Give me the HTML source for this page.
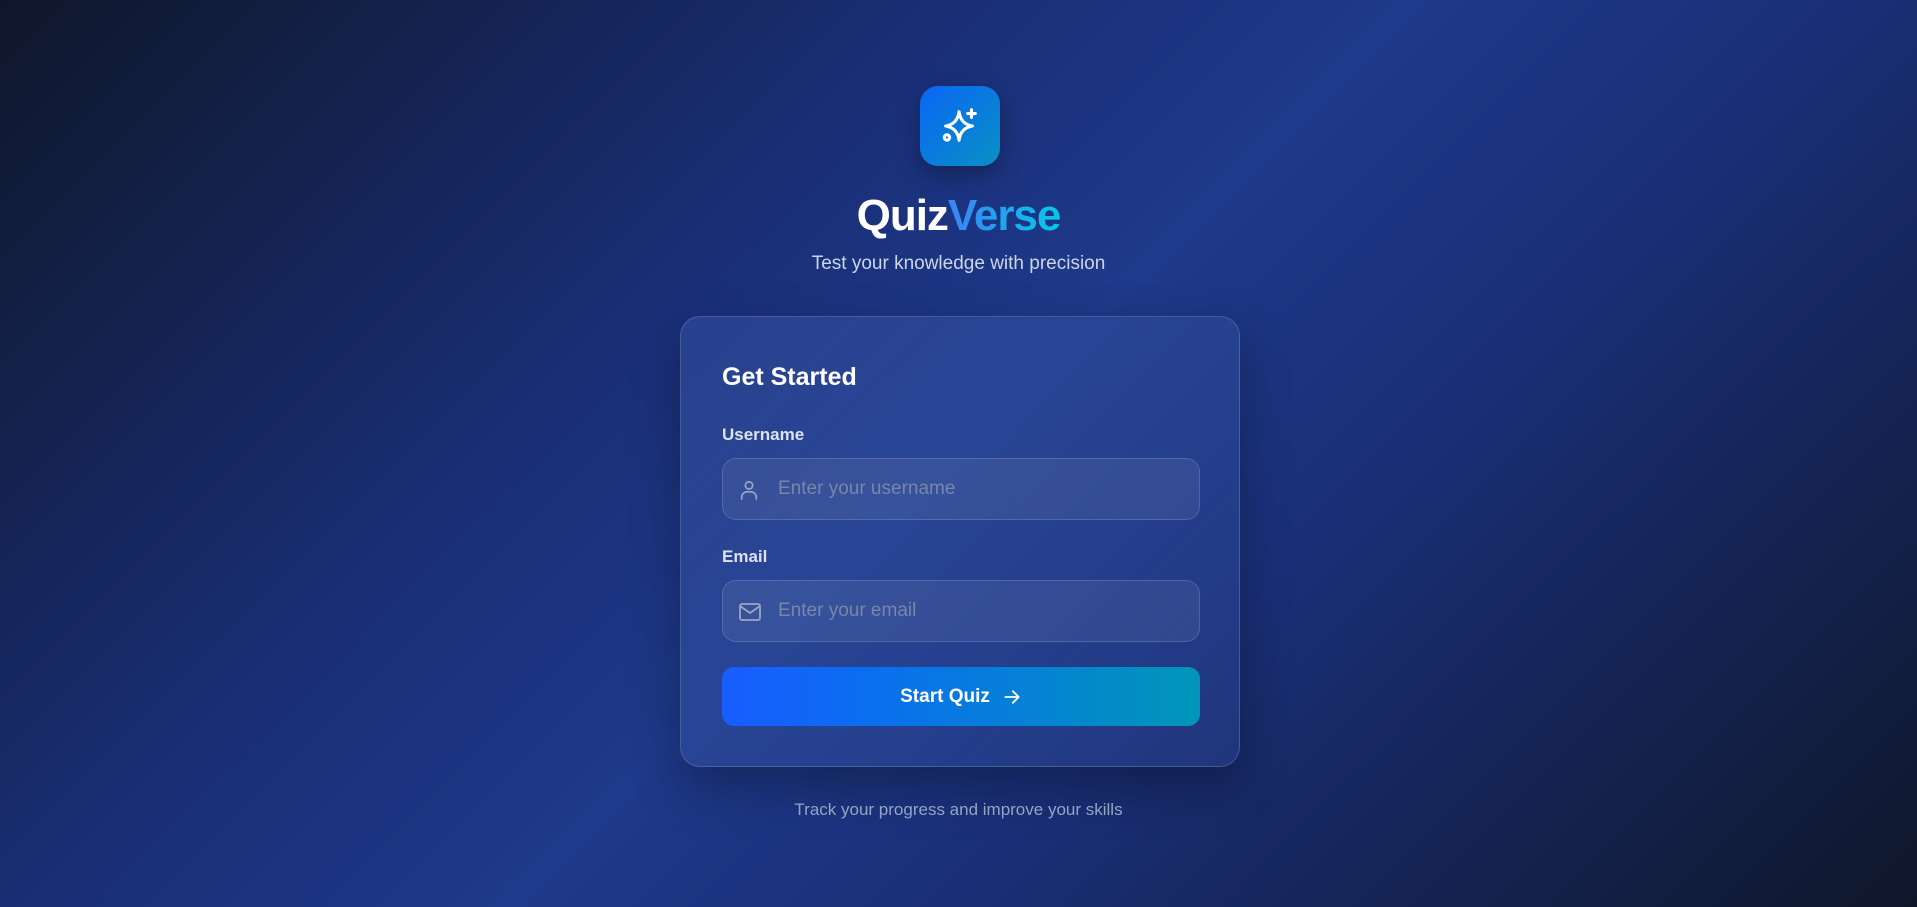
<!DOCTYPE html>
<html><head><meta charset="utf-8"><style>
*{box-sizing:border-box;margin:0;padding:0}
html,body{width:1917px;height:907px;overflow:hidden}
body{font-family:"Liberation Sans",sans-serif;background:linear-gradient(135deg,#0f172a 0%,#1a2f78 35%,#1e3a8a 50%,#1a2f78 65%,#0f172a 100%);position:relative;color:#fff}
.logo{position:absolute;left:920px;top:86px;width:80px;height:80px;border-radius:18px;background:linear-gradient(135deg,#0a66f5,#0891c4);box-shadow:0 8px 24px rgba(0,0,0,.3);display:flex;align-items:center;justify-content:center}
.title{position:absolute;left:0;width:1917px;top:191px;text-align:center;font-size:44px;font-weight:bold;letter-spacing:-1px}
.title span{background:linear-gradient(90deg,#3b82f6,#06c8e8);-webkit-background-clip:text;color:transparent}
.sub{position:absolute;left:0;width:1917px;top:253px;text-align:center;font-size:19px;color:#cbd5e8}
.card{position:absolute;left:680px;top:316px;width:560px;height:451px;border-radius:20px;background:linear-gradient(135deg,rgba(60,90,170,.45),rgba(50,80,160,.3));border:1px solid rgba(255,255,255,.15);box-shadow:0 20px 50px rgba(0,0,0,.3)}
.h{position:absolute;left:41px;top:46px;font-size:25px;font-weight:bold}
.lbl{position:absolute;left:41px;font-size:17px;font-weight:bold;color:#dbe2f0}
.inp{position:absolute;left:41px;width:478px;height:62px;border-radius:14px;background:rgba(255,255,255,.07);border:1px solid rgba(255,255,255,.15)}
.inp svg{position:absolute;left:15px;top:19px}
.inp div{position:absolute;left:55px;top:19px;font-size:19px;color:#7886a8}
.btn{position:absolute;left:41px;top:350px;width:478px;height:59px;border-radius:12px;background:linear-gradient(90deg,#1a5cff,#0a6ef0 30%,#0096b8);display:flex;align-items:center;justify-content:center;font-size:19px;font-weight:bold;gap:12px}
.foot{position:absolute;left:0;width:1917px;top:800px;text-align:center;font-size:17px;color:#95a3c5}
</style></head><body>
<div class="logo"><svg width="46" height="46" viewBox="0 0 24 24" fill="none" stroke="#fff" stroke-width="1.6" stroke-linecap="round" stroke-linejoin="round"><path d="M11.5 4.5 Q12.3 11 18.5 12 Q12.3 13 11.5 19.5 Q10.7 13 4.5 12 Q10.7 11 11.5 4.5Z"/><path d="M18 3.5v4M16 5.5h4"/><circle cx="5.2" cy="18" r="1.4"/></svg></div>
<div class="title">Quiz<span>Verse</span></div>
<div class="sub">Test your knowledge with precision</div>
<div class="card">
<div class="h">Get Started</div>
<div class="lbl" style="top:108px">Username</div>
<div class="inp" style="top:141px"><svg width="22" height="24" viewBox="0 0 24 24" fill="none" stroke="#9aa6c4" stroke-width="1.8" stroke-linecap="round"><circle cx="12" cy="7" r="4"/><path d="M4 22v-2a6 6 0 0 1 6-6h4a6 6 0 0 1 6 6v2"/></svg><div>Enter your username</div></div>
<div class="lbl" style="top:230px">Email</div>
<div class="inp" style="top:263px"><svg width="24" height="24" viewBox="0 0 24 24" fill="none" stroke="#9aa6c4" stroke-width="1.8" stroke-linejoin="round"><rect x="2" y="4" width="20" height="16" rx="2"/><path d="M2 6l10 7 10-7"/></svg><div>Enter your email</div></div>
<div class="btn">Start Quiz <svg width="20" height="20" viewBox="0 0 24 24" fill="none" stroke="#fff" stroke-width="2.2" stroke-linecap="round" stroke-linejoin="round"><path d="M4 12h16M13 5l7 7-7 7"/></svg></div>
</div>
<div class="foot">Track your progress and improve your skills</div>
</body></html>
